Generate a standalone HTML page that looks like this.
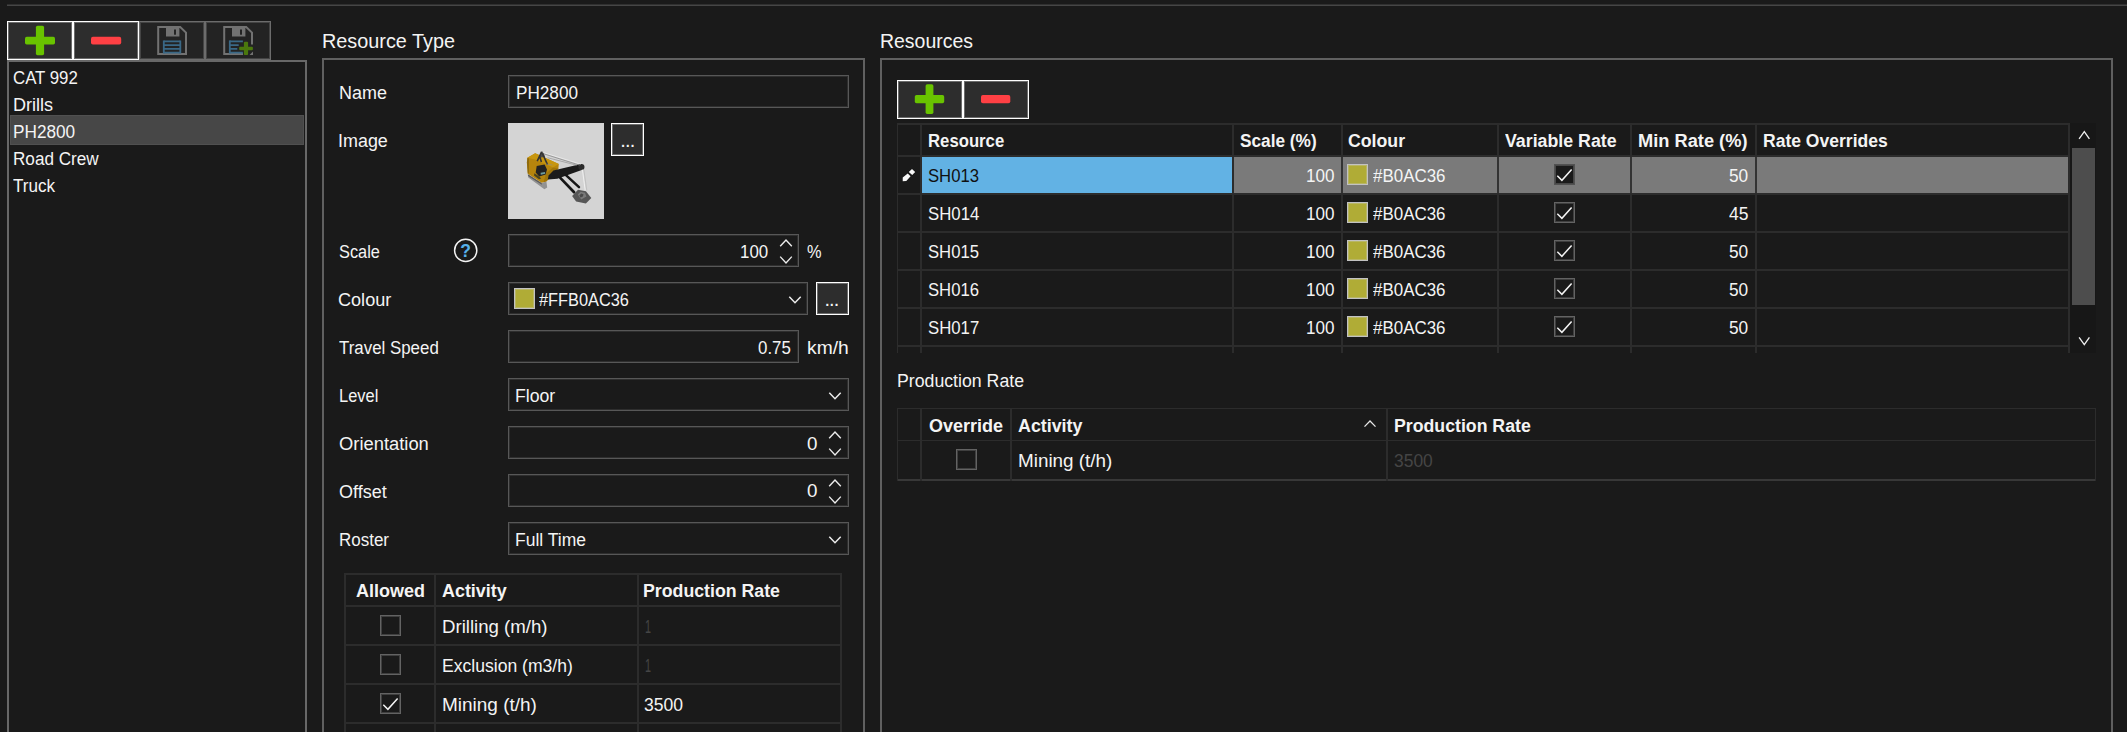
<!DOCTYPE html>
<html lang="en">
<head>
<meta charset="utf-8">
<title>Resource Types</title>
<style>
*{box-sizing:border-box;margin:0;padding:0}
html,body{width:2127px;height:732px;overflow:hidden;background:#1a1a1a}
body{position:relative;font-family:"Liberation Sans",sans-serif;font-size:18px;color:#f4f4f4}
.a{position:absolute}
.t{position:absolute;white-space:nowrap;line-height:20px;height:20px;transform-origin:0 50%}
.h{font-size:21px}
.b{font-weight:bold}
.dis{color:#454545}
.sel{color:#101010}
.btn{position:absolute;background:#2d2d2d;border:1px solid #fff;box-shadow:inset 0 0 0 1px rgba(255,255,255,.30)}
.btn.g{border-color:#6c6c6c;background:#232323;box-shadow:inset 0 0 0 1px rgba(108,108,108,.45)}
.box{position:absolute;border:2px solid #606060}
.inp{position:absolute;border:1px solid #575757;box-shadow:inset 0 0 0 1px rgba(87,87,87,.35);height:33px}
.sw{position:absolute;width:21px;height:21px;background:#b0ac36;border:1px solid #c2c2c2;box-shadow:inset 0 0 0 1px rgba(200,200,190,.35)}
.cb{position:absolute;width:21px;height:21px;border:1px solid #636363;box-shadow:inset 0 0 0 1px rgba(99,99,99,.5)}
.cb svg{position:absolute;left:-1px;top:-1px}
.gl{position:absolute;background:#2c2c2c}
</style>
</head>
<body>
<div class="a" style="left:7px;top:4px;width:2120px;height:1px;background:#303030"></div>
<div class="a" style="left:7px;top:5px;width:2120px;height:1px;background:#464646"></div>
<div class="btn" style="left:7px;top:21px;width:66px;height:39px"></div>
<div class="btn" style="left:73px;top:21px;width:66px;height:39px"></div>
<div class="btn g" style="left:139px;top:21px;width:66px;height:39px"></div>
<div class="btn g" style="left:205px;top:21px;width:66px;height:39px"></div>
<svg class="a" style="left:7px;top:21px" width="264" height="39" viewBox="7 21 264 39">
<rect x="35.9" y="25.7" width="8.2" height="29.6" rx="1.7" fill="#69c300"/>
<rect x="25" y="36.8" width="30" height="7.6" rx="1.7" fill="#69c300"/>
<rect x="91" y="36.8" width="30.2" height="7.6" rx="1.9" fill="#ff4044"/>
<g id="floppy" fill="none" stroke="#727272" stroke-width="2">
<path d="M158.2 27 H180.2 L186 32.6 V54 H158.2 Z"/>
</g>
<rect x="166" y="26" width="13.4" height="10.5" fill="#727272"/>
<rect x="174" y="29.5" width="2" height="5.2" fill="#232323"/>
<g stroke="#3a6886" stroke-width="1.8" fill="none">
<path d="M163.8 41.3 H180.3 M163.8 45.1 H180.3 M163.8 48.9 H180.3 M163.8 52.6 H180.3"/>
<path d="M163.8 40.4 V53.5 M180.3 40.4 V53.5"/>
</g>
<g fill="none" stroke="#727272" stroke-width="2">
<path d="M243 54 H224.2 V27 H246.2 L252 32.6 V44.6"/>
</g>
<path d="M249.5 55 L253 51.5 V55 Z" fill="#727272"/>
<rect x="232" y="26" width="13.4" height="10.5" fill="#727272"/>
<rect x="240" y="29.5" width="2" height="5.2" fill="#232323"/>
<g stroke="#3a6886" stroke-width="1.8" fill="none">
<path d="M229.8 41.3 H242.9 M229.8 45.1 H238.7 M229.8 48.9 H237.3 M229.8 52.6 H242.9"/>
<path d="M229.8 40.4 V53.5"/>
</g>
<rect x="243.9" y="41.8" width="4.2" height="13.2" rx="1" fill="#4a780d"/>
<rect x="239.2" y="46.7" width="13.7" height="3.6" rx="1" fill="#4a780d"/>
</svg>
<div class="box" style="left:7px;top:60px;width:300px;height:700px;border-color:#686868"></div>
<div class="a" style="left:10px;top:115px;width:294px;height:30px;background:#474747;border:1px solid #505050"></div>
<div class="box" style="left:322px;top:58px;width:543px;height:700px"></div>
<div class="inp" style="left:508px;top:75px;width:341px;height:33px"></div>
<svg class="a" style="left:508px;top:123px" width="96" height="96" viewBox="0 0 96 96">
<rect width="96" height="96" fill="#d4d4d4"/>
<g>
<path d="M19.9 51.2 L33.6 60 L38.4 58.6 L39.2 64.4 L36.4 66.2 L20.3 54.6 Z" fill="#929292"/>
<path d="M19.9 51.2 L33.6 60 L33.9 61.8 L20 53 Z" fill="#5c5c5c"/>
<path d="M18.9 39.6 L19.4 34.7 L27.2 30.3 L50.8 41.1 L50.4 45.5 L38.5 58.3 L33.6 59.8 L19.8 50.8 Z" fill="#b6850d"/>
<path d="M19.4 34.7 L27.2 30.3 L50.8 41.1 L45 44.4 L27 36.4 Z" fill="#c7960f"/>
<path d="M38.5 58.3 L50.4 45.5 L45 44.4 L38 50.5 L35.6 59.2 Z" fill="#a0750a"/>
<path d="M18.9 39.6 L19.4 34.7 L21 35.6 L21 50 L19.8 50.8 Z" fill="#8f6a0c"/>
<path d="M45.4 47.5 L73 41.1 L75.6 42.4 L76 45.6 L73 47.2 L49.4 55.8 L39.8 56.4 L40.6 52.4 Z" fill="#1b1b1b"/>
<circle cx="73.4" cy="44" r="3.1" fill="#2b2b2b"/>
<path d="M52.3 54.9 L66.1 69.2" stroke="#151515" stroke-width="2.7" stroke-linecap="round"/>
<path d="M58.2 52.4 L71 64.2" stroke="#151515" stroke-width="2.5" stroke-linecap="round"/>
<path d="M28.7 43.1 L36.6 41.6 L39 46.5 L37.6 51.4 L31.2 53.4 L27.7 49.5 Z" fill="#222"/>
<path d="M32.6 49.7 L37 49 L37.2 50.8 L32.8 51.7 Z" fill="#6f9c9c"/>
<path d="M26.4 50.2 L31.2 53.6 L33.2 55.6 L31 56.2 L26 52.4 Z" fill="#4a431f"/>
<path d="M33.7 28.2 L30.6 34.8 L36.9 34 L35.6 29.6 Z" fill="#4c4c4c"/>
<path d="M33.6 28.8 L29.2 38.2 M33.8 29 L39.5 41.6 M31.6 33 L33.4 39" stroke="#343434" stroke-width="1.6" fill="none"/>
<path d="M34.6 29.3 L73 41.2" stroke="#efefef" stroke-width="0.7"/>
<path d="M34.8 30.5 L72 42.3" stroke="#6e6e6e" stroke-width="0.6"/>
<path d="M39.5 34.7 L69 42.3" stroke="#8c8c8c" stroke-width="0.6"/>
<path d="M38 41 L44.5 42" stroke="#8a8a8a" stroke-width="0.6"/>
<path d="M74.4 46.5 L77.2 67.4" stroke="#f6f6f6" stroke-width="0.8"/>
<path d="M75.8 46.5 L78.8 67.4" stroke="#b4b4b4" stroke-width="0.6"/>
<path d="M64.1 73.1 L70 66.7 L77.9 68.2 L83.3 75.1 L77.9 80.5 L68.1 78.5 Z" fill="#565656"/>
<path d="M69.8 71.6 L72.6 68.8 L77 69.8 L78.4 73.4 L73.2 76.4 Z" fill="#7a7a7a"/>
<path d="M71.4 72.2 L73.4 70.6 L75.6 71.4 L74.6 73.8 L72.4 74.4 Z" fill="#4a4a4a"/>
</g>
</svg>
<div class="btn" style="left:611px;top:123px;width:33px;height:33px"></div>
<svg class="a" style="left:452px;top:237px" width="28" height="28" viewBox="452 237 28 28">
<circle cx="465.7" cy="250.4" r="11.1" fill="none" stroke="#f4f4f4" stroke-width="1.5"/>
<text x="465.7" y="257" text-anchor="middle" font-family="Liberation Sans, sans-serif" font-weight="bold" font-size="17.5" fill="#56b0e9">?</text>
</svg>
<div class="inp" style="left:508px;top:234px;width:291px;height:33px"></div>
<svg class="a" style="left:777.2px;top:234px" width="18" height="33" viewBox="0 0 18 33"><path d="M3.2 12.3 L9 6 L14.8 12.3 M3.2 22.6 L9 28.9 L14.8 22.6" fill="none" stroke="#ececec" stroke-width="1.4"/></svg>
<div class="inp" style="left:508px;top:282px;width:300px;height:33px"></div>
<svg class="a" style="left:786px;top:282px" width="18" height="33" viewBox="0 0 18 33"><path d="M3.3 14.7 L9 20.7 L14.7 14.7" fill="none" stroke="#ececec" stroke-width="1.5"/></svg>
<div class="sw" style="left:514px;top:288px;width:21px;height:21px"></div>
<div class="btn" style="left:816px;top:282px;width:33px;height:33px"></div>
<div class="inp" style="left:508px;top:330px;width:291px;height:33px"></div>
<div class="inp" style="left:508px;top:378px;width:341px;height:33px"></div>
<svg class="a" style="left:826px;top:378px" width="18" height="33" viewBox="0 0 18 33"><path d="M3.3 14.7 L9 20.7 L14.7 14.7" fill="none" stroke="#ececec" stroke-width="1.5"/></svg>
<div class="inp" style="left:508px;top:426px;width:341px;height:33px"></div>
<svg class="a" style="left:826px;top:426px" width="18" height="33" viewBox="0 0 18 33"><path d="M3.2 12.3 L9 6 L14.8 12.3 M3.2 22.6 L9 28.9 L14.8 22.6" fill="none" stroke="#ececec" stroke-width="1.4"/></svg>
<div class="inp" style="left:508px;top:474px;width:341px;height:33px"></div>
<svg class="a" style="left:826px;top:474px" width="18" height="33" viewBox="0 0 18 33"><path d="M3.2 12.3 L9 6 L14.8 12.3 M3.2 22.6 L9 28.9 L14.8 22.6" fill="none" stroke="#ececec" stroke-width="1.4"/></svg>
<div class="inp" style="left:508px;top:522px;width:341px;height:33px"></div>
<svg class="a" style="left:826px;top:522px" width="18" height="33" viewBox="0 0 18 33"><path d="M3.3 14.7 L9 20.7 L14.7 14.7" fill="none" stroke="#ececec" stroke-width="1.5"/></svg>
<div class="gl" style="left:344px;top:573px;width:498px;height:2px"></div>
<div class="gl" style="left:344px;top:605px;width:498px;height:2px"></div>
<div class="gl" style="left:344px;top:644px;width:498px;height:2px"></div>
<div class="gl" style="left:344px;top:683px;width:498px;height:2px"></div>
<div class="gl" style="left:344px;top:722px;width:498px;height:2px"></div>
<div class="gl" style="left:344px;top:573px;width:2px;height:170px"></div>
<div class="gl" style="left:434px;top:573px;width:2px;height:170px"></div>
<div class="gl" style="left:637px;top:573px;width:2px;height:170px"></div>
<div class="gl" style="left:840px;top:573px;width:2px;height:170px"></div>
<div class="cb" style="left:380px;top:615px;width:21px;height:21px"></div>
<div class="cb" style="left:380px;top:654px;width:21px;height:21px"></div>
<div class="cb" style="left:380px;top:693px;width:21px;height:21px"><svg width="21" height="21" viewBox="0 0 21 21"><path d="M3.3 11.8 L7.9 16.3 L17.6 5.4" fill="none" stroke="#f4f4f4" stroke-width="1.5"/></svg></div>
<div class="box" style="left:880px;top:58px;width:1233px;height:700px"></div>
<div class="btn" style="left:897px;top:80px;width:66px;height:39px"></div>
<div class="btn" style="left:963px;top:80px;width:66px;height:39px"></div>
<svg class="a" style="left:897px;top:80px" width="132" height="39" viewBox="897 80 132 39">
<rect x="925.6" y="84.3" width="7.8" height="29.6" rx="1.7" fill="#69c300"/>
<rect x="914.8" y="95" width="29.4" height="8.2" rx="1.7" fill="#69c300"/>
<rect x="981" y="95" width="29.3" height="8.2" rx="1.9" fill="#ff4044"/>
</svg>
<div class="a" style="left:922px;top:157px;width:310px;height:36px;background:#62b2e4"></div>
<div class="a" style="left:1233px;top:157px;width:836px;height:36px;background:#7a7a7a"></div>
<div class="gl" style="left:897px;top:123px;width:1172px;height:2px"></div>
<div class="gl" style="left:897px;top:155px;width:1172px;height:2px"></div>
<div class="gl" style="left:897px;top:193px;width:1172px;height:2px"></div>
<div class="gl" style="left:897px;top:231px;width:1172px;height:2px"></div>
<div class="gl" style="left:897px;top:269px;width:1172px;height:2px"></div>
<div class="gl" style="left:897px;top:307px;width:1172px;height:2px"></div>
<div class="gl" style="left:897px;top:345px;width:1172px;height:2px"></div>
<div class="gl" style="left:897px;top:123px;width:1px;height:230px"></div>
<div class="gl" style="left:920px;top:123px;width:2px;height:230px"></div>
<div class="gl" style="left:1232px;top:123px;width:2px;height:230px"></div>
<div class="gl" style="left:1341px;top:123px;width:2px;height:230px"></div>
<div class="gl" style="left:1497px;top:123px;width:2px;height:230px"></div>
<div class="gl" style="left:1630px;top:123px;width:2px;height:230px"></div>
<div class="gl" style="left:1755px;top:123px;width:2px;height:230px"></div>
<div class="gl" style="left:2068px;top:123px;width:2px;height:230px"></div>
<div class="a" style="left:1341px;top:157px;width:2px;height:36px;background:#333"></div>
<div class="a" style="left:1497px;top:157px;width:2px;height:36px;background:#333"></div>
<div class="a" style="left:1630px;top:157px;width:2px;height:36px;background:#333"></div>
<div class="a" style="left:1755px;top:157px;width:2px;height:36px;background:#333"></div>
<svg class="a" style="left:900px;top:167px" width="18" height="16" viewBox="900 167 18 16"><path d="M902.7 177.6 L907.7 173.6 L910.6 176.2 L906.3 181 L902.7 181.2 Z M912 169.1 L915.2 171.9 L912.2 175.1 L908.8 171.9 Z" fill="#f8f8f8" stroke="#0c0c0c" stroke-width="0.5" paint-order="stroke"/></svg>
<div class="sw" style="left:1347px;top:164px;width:21px;height:21px"></div>
<div class="cb" style="left:1554px;top:164px;width:21px;height:21px;background:#1a1a1a;border-color:#525252;box-shadow:inset 0 0 0 1px rgba(82,82,82,.8)"><svg width="21" height="21" viewBox="0 0 21 21"><path d="M3.3 11.8 L7.9 16.3 L17.6 5.4" fill="none" stroke="#f4f4f4" stroke-width="1.5"/></svg></div>
<div class="sw" style="left:1347px;top:202px;width:21px;height:21px"></div>
<div class="cb" style="left:1554px;top:202px;width:21px;height:21px"><svg width="21" height="21" viewBox="0 0 21 21"><path d="M3.3 11.8 L7.9 16.3 L17.6 5.4" fill="none" stroke="#f4f4f4" stroke-width="1.5"/></svg></div>
<div class="sw" style="left:1347px;top:240px;width:21px;height:21px"></div>
<div class="cb" style="left:1554px;top:240px;width:21px;height:21px"><svg width="21" height="21" viewBox="0 0 21 21"><path d="M3.3 11.8 L7.9 16.3 L17.6 5.4" fill="none" stroke="#f4f4f4" stroke-width="1.5"/></svg></div>
<div class="sw" style="left:1347px;top:278px;width:21px;height:21px"></div>
<div class="cb" style="left:1554px;top:278px;width:21px;height:21px"><svg width="21" height="21" viewBox="0 0 21 21"><path d="M3.3 11.8 L7.9 16.3 L17.6 5.4" fill="none" stroke="#f4f4f4" stroke-width="1.5"/></svg></div>
<div class="sw" style="left:1347px;top:316px;width:21px;height:21px"></div>
<div class="cb" style="left:1554px;top:316px;width:21px;height:21px"><svg width="21" height="21" viewBox="0 0 21 21"><path d="M3.3 11.8 L7.9 16.3 L17.6 5.4" fill="none" stroke="#f4f4f4" stroke-width="1.5"/></svg></div>
<div class="a" style="left:2070px;top:123px;width:26px;height:230px;background:#171717"></div>
<div class="a" style="left:2072px;top:148px;width:23px;height:157px;background:#4d4d4d"></div>
<svg class="a" style="left:2072px;top:123px" width="23" height="230" viewBox="2072 123 23 230"><path d="M2079.1 138.9 L2084.3 131.7 L2089.4 138.9" fill="none" stroke="#f0f0f0" stroke-width="1.3"/><path d="M2079.1 337.3 L2084.3 344.6 L2089.4 337.3" fill="none" stroke="#f0f0f0" stroke-width="1.3"/></svg>
<div class="gl" style="left:897px;top:408px;width:1199px;height:1px"></div>
<div class="gl" style="left:897px;top:440px;width:1199px;height:1px"></div>
<div class="gl" style="left:897px;top:479px;width:1199px;height:2px;background:#383838"></div>
<div class="gl" style="left:897px;top:408px;width:1px;height:73px"></div>
<div class="gl" style="left:920px;top:408px;width:2px;height:73px"></div>
<div class="gl" style="left:1010px;top:408px;width:2px;height:73px"></div>
<div class="gl" style="left:1386px;top:408px;width:2px;height:73px"></div>
<div class="gl" style="left:2095px;top:408px;width:1px;height:73px"></div>
<svg class="a" style="left:1363px;top:419px" width="14" height="10" viewBox="0 0 14 10"><path d="M1.5 7.6 L7 2 L12.5 7.6" fill="none" stroke="#e8e8e8" stroke-width="1.3"/></svg>
<div class="cb" style="left:956px;top:449px;width:21px;height:21px"></div>
<div class="t" style="left:620.3px;top:130px;font-size:20px;letter-spacing:-0.85px">...</div>
<div class="t" style="left:824.4px;top:289.3px;font-size:20px;letter-spacing:-0.85px">...</div>
<div class="t" style="left:13.14px;top:68px;transform:scaleX(0.9341)">CAT 992</div>
<div class="t" style="left:12.80px;top:95px;transform:scaleX(1.0039)">Drills</div>
<div class="t" style="left:12.95px;top:122px;transform:scaleX(0.9561)">PH2800</div>
<div class="t" style="left:12.95px;top:149px;transform:scaleX(0.9518)">Road Crew</div>
<div class="t" style="left:12.91px;top:176px;transform:scaleX(0.9495)">Truck</div>
<div class="t h" style="left:322.43px;top:28.6px;transform:scaleX(0.9443);line-height:24px;height:24px">Resource Type</div>
<div class="t h" style="left:880.35px;top:28.6px;transform:scaleX(0.9264);line-height:24px;height:24px">Resources</div>
<div class="t" style="left:338.50px;top:83px;transform:scaleX(0.9968)">Name</div>
<div class="t" style="left:515.95px;top:83px;transform:scaleX(0.9530)">PH2800</div>
<div class="t" style="left:338.26px;top:130.5px;transform:scaleX(0.9959)">Image</div>
<div class="t" style="left:339.08px;top:242px;transform:scaleX(0.9074)">Scale</div>
<div class="t" style="left:739.60px;top:242px;transform:scaleX(0.9375)">100</div>
<div class="t" style="left:806.68px;top:242px;transform:scaleX(0.9085)">%</div>
<div class="t" style="left:338.30px;top:290px;transform:scaleX(1.0048)">Colour</div>
<div class="t" style="left:539.06px;top:290px;transform:scaleX(0.9076)">#FFB0AC36</div>
<div class="t" style="left:339.21px;top:338px;transform:scaleX(0.9379)">Travel Speed</div>
<div class="t" style="left:758.37px;top:338px;transform:scaleX(0.9388)">0.75</div>
<div class="t" style="left:807.09px;top:338px;transform:scaleX(1.0697)">km/h</div>
<div class="t" style="left:339.00px;top:386px;transform:scaleX(0.9135)">Level</div>
<div class="t" style="left:515.32px;top:386px;transform:scaleX(0.9813)">Floor</div>
<div class="t" style="left:338.64px;top:434px;transform:scaleX(1.0201)">Orientation</div>
<div class="t" style="left:806.93px;top:433.9px;transform:scaleX(1.0430)">0</div>
<div class="t" style="left:338.95px;top:481.6px;transform:scaleX(1.0011)">Offset</div>
<div class="t" style="left:806.93px;top:481.4px;transform:scaleX(1.0430)">0</div>
<div class="t" style="left:338.76px;top:530px;transform:scaleX(0.9433)">Roster</div>
<div class="t" style="left:515.43px;top:530px;transform:scaleX(0.9713)">Full Time</div>
<div class="t b" style="left:355.60px;top:580.7px;transform:scaleX(0.9993)">Allowed</div>
<div class="t b" style="left:442.10px;top:580.7px;transform:scaleX(0.9954)">Activity</div>
<div class="t b" style="left:643.46px;top:580.7px;transform:scaleX(0.9852)">Production Rate</div>
<div class="t" style="left:442.06px;top:617.3px;transform:scaleX(1.0349)">Drilling (m/h)</div>
<div class="t dis" style="left:645.19px;top:617.3px;transform:scaleX(0.6023)">1</div>
<div class="t" style="left:442.13px;top:655.8px;transform:scaleX(0.9758)">Exclusion (m3/h)</div>
<div class="t dis" style="left:645.19px;top:655.8px;transform:scaleX(0.6023)">1</div>
<div class="t" style="left:442.04px;top:694.7px;transform:scaleX(1.0544)">Mining (t/h)</div>
<div class="t" style="left:643.96px;top:694.7px;transform:scaleX(0.9760)">3500</div>
<div class="t b" style="left:927.91px;top:131px;transform:scaleX(0.9291)">Resource</div>
<div class="t b" style="left:1239.70px;top:131px;transform:scaleX(0.9579)">Scale (%)</div>
<div class="t b" style="left:1347.96px;top:131px;transform:scaleX(0.9844)">Colour</div>
<div class="t b" style="left:1504.55px;top:131px;transform:scaleX(0.9872)">Variable Rate</div>
<div class="t b" style="left:1638.34px;top:131px;transform:scaleX(1.0136)">Min Rate (%)</div>
<div class="t b" style="left:1762.67px;top:131px;transform:scaleX(0.9740)">Rate Overrides</div>
<div class="t" style="left:897.42px;top:371px;transform:scaleX(0.9839)">Production Rate</div>
<div class="t b" style="left:929.05px;top:415.7px;transform:scaleX(1.0007)">Override</div>
<div class="t b" style="left:1017.90px;top:415.7px;transform:scaleX(0.9908)">Activity</div>
<div class="t b" style="left:1393.76px;top:415.7px;transform:scaleX(0.9837)">Production Rate</div>
<div class="t" style="left:1017.75px;top:450.7px;transform:scaleX(1.0476)">Mining (t/h)</div>
<div class="t dis" style="left:1394.26px;top:450.7px;transform:scaleX(0.9684)">3500</div>
<div class="t sel" style="left:927.88px;top:166px;transform:scaleX(0.9263)">SH013</div>
<div class="t" style="left:1305.89px;top:166px;transform:scaleX(0.9479)">100</div>
<div class="t" style="left:1372.58px;top:166px;transform:scaleX(0.9409)">#B0AC36</div>
<div class="t" style="left:1729.46px;top:166px;transform:scaleX(0.9585)">50</div>
<div class="t" style="left:927.87px;top:204px;transform:scaleX(0.9331)">SH014</div>
<div class="t" style="left:1305.89px;top:204px;transform:scaleX(0.9479)">100</div>
<div class="t" style="left:1372.58px;top:204px;transform:scaleX(0.9409)">#B0AC36</div>
<div class="t" style="left:1729.20px;top:204px;transform:scaleX(0.9719)">45</div>
<div class="t" style="left:927.88px;top:242px;transform:scaleX(0.9263)">SH015</div>
<div class="t" style="left:1305.89px;top:242px;transform:scaleX(0.9479)">100</div>
<div class="t" style="left:1372.58px;top:242px;transform:scaleX(0.9409)">#B0AC36</div>
<div class="t" style="left:1729.46px;top:242px;transform:scaleX(0.9585)">50</div>
<div class="t" style="left:927.88px;top:280px;transform:scaleX(0.9263)">SH016</div>
<div class="t" style="left:1305.89px;top:280px;transform:scaleX(0.9479)">100</div>
<div class="t" style="left:1372.58px;top:280px;transform:scaleX(0.9409)">#B0AC36</div>
<div class="t" style="left:1729.46px;top:280px;transform:scaleX(0.9585)">50</div>
<div class="t" style="left:927.87px;top:318px;transform:scaleX(0.9306)">SH017</div>
<div class="t" style="left:1305.89px;top:318px;transform:scaleX(0.9479)">100</div>
<div class="t" style="left:1372.58px;top:318px;transform:scaleX(0.9409)">#B0AC36</div>
<div class="t" style="left:1729.46px;top:318px;transform:scaleX(0.9585)">50</div>
</body>
</html>
